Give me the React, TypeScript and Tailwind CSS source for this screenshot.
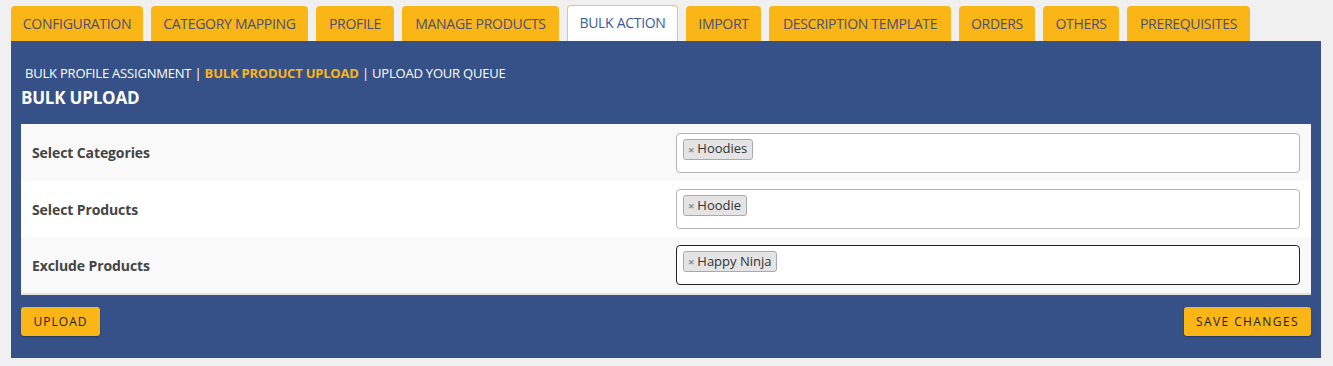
import React from "react";

const tabs: { label: string; w: string; active?: boolean }[] = [
  { label: "CONFIGURATION", w: "w-[132px]" },
  { label: "CATEGORY MAPPING", w: "w-[157px]" },
  { label: "PROFILE", w: "w-[78px]" },
  { label: "MANAGE PRODUCTS", w: "w-[157px]" },
  { label: "BULK ACTION", w: "w-[111px]", active: true },
  { label: "IMPORT", w: "w-[75px]" },
  { label: "DESCRIPTION TEMPLATE", w: "w-[182px]" },
  { label: "ORDERS", w: "w-[76px]" },
  { label: "OTHERS", w: "w-[76px]" },
  { label: "PREREQUISITES", w: "w-[123px]" },
];

const rows = [
  { label: "Select Categories", chip: "Hoodies", bg: "bg-[#f9f9f9]", focus: false, h: "h-[57px]" },
  { label: "Select Products", chip: "Hoodie", bg: "bg-white", focus: false, h: "h-[56px]" },
  { label: "Exclude Products", chip: "Happy Ninja", bg: "bg-[#f9f9f9]", focus: true, h: "h-[56px]" },
];

export default function App() {
  return (
    <div className="min-h-[366px] bg-[#f0f0f0] pt-[6px] pl-[11px] pr-[12px] font-['Open_Sans','Noto_Sans',sans-serif]">
      <div className="flex items-end gap-[8px] h-[35px]">
        {tabs.map((t) =>
          t.active ? (
            <div
              key={t.label}
              className={`${t.w} h-[36px] flex items-center justify-center rounded-t-[4px] border border-b-0 border-[#f5c35a] bg-white text-[14px] text-[#3b5aa0] tracking-[-0.3px]`}
            >
              <span className="-mt-[2px]">{t.label}</span>
            </div>
          ) : (
            <div
              key={t.label}
              className={`${t.w} h-[35px] flex items-center justify-center rounded-t-[4px] bg-[#fab517] text-[14px] text-[#4a5079] tracking-[-0.3px]`}
            >
              {t.label}
            </div>
          )
        )}
      </div>
      <div className="bg-[#365188] h-[317px] px-[10px] pt-[24px]">
        <div className="text-[13px] text-white pl-[4px] leading-[16px] tracking-[-0.2px]">
          BULK PROFILE ASSIGNMENT | <span className="font-bold text-[#fab517]">BULK PRODUCT UPLOAD</span> | UPLOAD YOUR QUEUE
        </div>
        <div className="mt-[6px] text-[17px] font-bold text-white leading-[22px] tracking-[-0.2px]">BULK UPLOAD</div>
        <div className="mt-[15px] bg-white border-b-[2px] border-[#e2e2e2]">
          {rows.map((r) => (
            <div key={r.label} className={`${r.bg} ${r.h} flex items-center`}>
              <div className="w-[655px] pl-[11px] text-[14px] font-bold text-[#444] tracking-[-0.1px]">{r.label}</div>
              <div
                className={`flex-1 mr-[11px] h-[40px] rounded-[4px] bg-white border ${
                  r.focus ? "border-[#222]" : "border-[#b4b4b4]"
                } flex items-start pt-[5px] pl-[6px]`}
              >
                <span className="flex items-center h-[21px] rounded-[3px] border border-[#aaa] bg-[#e4e4e4] pl-[4px] pr-[5px] text-[13px] text-[#333]">
                  <span className="text-[#888] text-[11px] font-bold mr-[3px] leading-none">×</span>
                  {r.chip}
                </span>
              </div>
            </div>
          ))}
        </div>
        <div className="mt-[12px] flex justify-between">
          <button className="h-[29px] w-[79px] rounded-[3px] bg-[#fab517] text-[12px] text-[#1f1f1f] tracking-[1px] shadow-[0_1px_2px_rgba(0,0,0,0.35)]">
            UPLOAD
          </button>
          <button className="h-[29px] w-[127px] rounded-[3px] bg-[#fab517] text-[12px] text-[#1f1f1f] tracking-[1.4px] shadow-[0_1px_2px_rgba(0,0,0,0.35)]">
            SAVE CHANGES
          </button>
        </div>
      </div>
    </div>
  );
}
